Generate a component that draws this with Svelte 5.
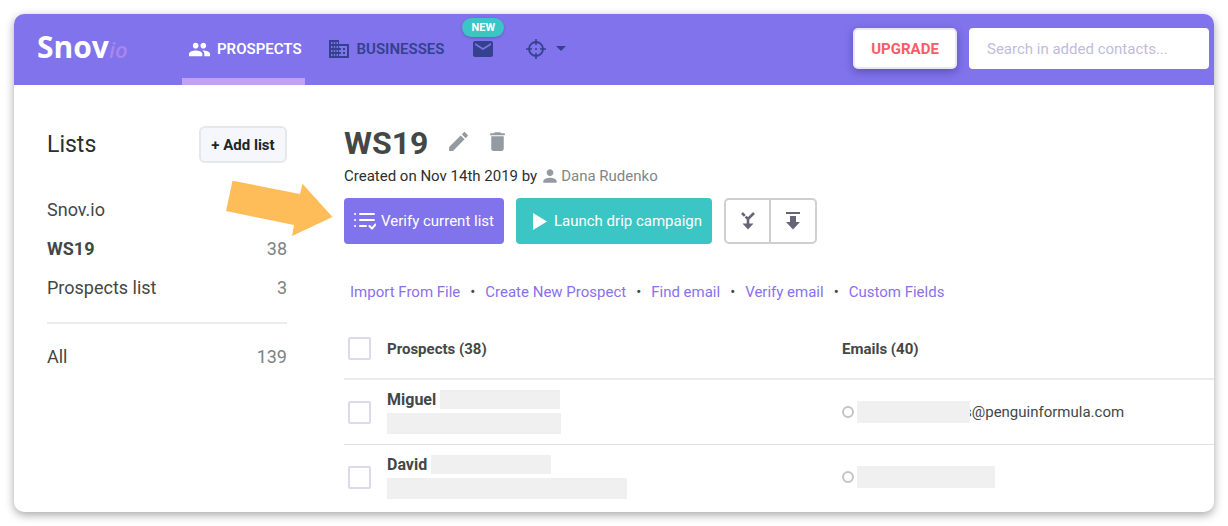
<script>
  let search = $state('');
  let activeList = $state('WS19');

  const lists = [
    { name: 'Snov.io', count: '' },
    { name: 'WS19', count: 38 },
    { name: 'Prospects list', count: 3 }
  ];

  const actions = ['Import From File', 'Create New Prospect', 'Find email', 'Verify email', 'Custom Fields'];

  // widths of the hidden values, in px
  let prospects = $state([
    { name: 'Miguel', surname: 120, company: 174, email: 113, domain: 's@penguinformula.com', checked: false },
    { name: 'David', surname: 120, company: 240, email: 138, domain: '', checked: false }
  ]);

  let allChecked = $derived(prospects.every((p) => p.checked));

  function toggleAll(e) {
    const value = e.currentTarget.checked;
    prospects.forEach((p) => (p.checked = value));
  }

  const icons = {
    people: 'M16 11c1.66 0 2.99-1.34 2.99-3S17.66 5 16 5c-1.66 0-3 1.34-3 3s1.34 3 3 3zm-8 0c1.66 0 2.99-1.34 2.99-3S9.66 5 8 5C6.34 5 5 6.34 5 8s1.34 3 3 3zm0 2c-2.33 0-7 1.17-7 3.5V19h14v-2.5c0-2.33-4.67-3.5-7-3.5zm8 0c-.29 0-.62.02-.97.05 1.16.84 1.97 1.97 1.97 3.45V19h6v-2.5c0-2.33-4.67-3.5-7-3.5z',
    business: 'M12 7V3H2v18h20V7H12zM5.5 19H4v-2h1.5v2zm0-4H4v-2h1.5v2zm0-4H4V9h1.5v2zm0-4H4V5h1.5v2zm2.7 12H6.8v-2h1.4v2zm0-4H6.8v-2h1.4v2zm0-4H6.8V9h1.4v2zm0-4H6.8V5h1.4v2zM11 19H9.5v-2H11v2zm0-4H9.5v-2H11v2zm0-4H9.5V9H11v2zm0-4H9.5V5H11v2zm9 12h-8v-2h2v-2h-2v-2h2v-2h-2V9h8v10zm-2-8h-2v2h2v-2zm0 4h-2v2h2v-2z',
    mail: 'M20 4H4c-1.1 0-1.99.9-1.99 2L2 18c0 1.1.9 2 2 2h16c1.1 0 2-.9 2-2V6c0-1.1-.9-2-2-2zm0 4l-8 5-8-5V6l8 5 8-5v2z',
    edit: 'M3 17.25V21h3.75L17.81 9.94l-3.75-3.75L3 17.25zM20.71 7.04c.39-.39.39-1.02 0-1.41l-2.34-2.34c-.39-.39-1.02-.39-1.41 0l-1.83 1.83 3.75 3.75 1.83-1.83z',
    trash: 'M6 19c0 1.1.9 2 2 2h8c1.1 0 2-.9 2-2V7H6v12zM19 4h-3.5l-1-1h-5l-1 1H5v2h14V4z',
    person: 'M12 12c2.21 0 4-1.79 4-4s-1.79-4-4-4-4 1.79-4 4 1.79 4 4 4zm0 2c-2.67 0-8 1.34-8 4v2h16v-2c0-2.66-5.33-4-8-4z'
  };
</script>

{#snippet icon(name, size)}
  <svg width={size} height={size} viewBox="0 0 24 24" fill="currentColor" aria-hidden="true">
    <path d={icons[name]} />
  </svg>
{/snippet}

<div class="app">
  <header>
    <a class="logo" href="#home">Snov<i>io</i></a>

    <nav>
      <a class="nav-item active" href="#prospects">{@render icon('people', 23)}PROSPECTS</a>
      <a class="nav-item" href="#businesses">{@render icon('business', 24)}BUSINESSES</a>
      <a class="nav-item mail" href="#campaigns" aria-label="Campaigns">
        {@render icon('mail', 24)}
        <span class="badge">NEW</span>
      </a>
      <button class="nav-item tools" aria-label="Tools">
        <svg width="20" height="20" viewBox="0 0 20 20" fill="none" stroke="currentColor" stroke-width="1.8" aria-hidden="true">
          <circle cx="10" cy="10" r="7" />
          <path d="M10 0v6M10 14v6M0 10h6M14 10h6" stroke-width="1.6" />
          <circle cx="10" cy="10" r="1" fill="currentColor" stroke="none" />
        </svg>
        <svg width="10" height="5" viewBox="0 0 10 5" fill="currentColor" aria-hidden="true">
          <path d="M0 0h10L5 5z" />
        </svg>
      </button>
    </nav>

    <button class="upgrade">UPGRADE</button>
    <input class="search" type="text" aria-label="Search" placeholder="Search in added contacts..." bind:value={search} />
  </header>

  <div class="body">
    <aside>
      <div class="lists-head">
        <h2>Lists</h2>
        <button class="add-list">+ Add list</button>
      </div>
      <ul>
        {#each lists as list}
          <li>
            <button class="list" class:selected={list.name === activeList} onclick={() => (activeList = list.name)}>
              <span>{list.name}</span>
              <span class="count">{list.count}</span>
            </button>
          </li>
        {/each}
      </ul>
      <button class="list all">
        <span>All</span>
        <span class="count">139</span>
      </button>
    </aside>

    <main>
      <div class="title">
        <h1>WS19</h1>
        <button class="icon-btn" aria-label="Rename list">{@render icon('edit', 25)}</button>
        <button class="icon-btn" aria-label="Delete list">{@render icon('trash', 25)}</button>
      </div>
      <p class="created">
        Created on Nov 14th 2019 by
        <span class="author">{@render icon('person', 20)}Dana Rudenko</span>
      </p>

      <div class="buttons">
        <svg class="pointer" width="108" height="57" viewBox="0 0 108 57" aria-hidden="true">
          <path fill="#ffbd59" d="M6.5 .7L74 14l2.5-10.3L106.5 37 66 56l2-11L0 31z" />
        </svg>
        <button class="btn verify">
          <svg width="22" height="18" viewBox="0 0 22 18" fill="none" stroke="currentColor" stroke-width="2" stroke-linecap="round" aria-hidden="true">
            <path d="M6 2h14M6 8h14M6 14h6" />
            <path d="M1 2h.1M1 8h.1M1 14h.1" />
            <path d="M15.5 14l2.5 2.5 3.5-4" stroke-linejoin="round" />
          </svg>
          Verify current list
        </button>
        <button class="btn launch">
          <svg width="14" height="17" viewBox="0 0 14 17" fill="currentColor" aria-hidden="true">
            <path d="M0 0l14 8.5L0 17z" />
          </svg>
          Launch drip campaign
        </button>
        <div class="group">
          <button aria-label="Merge lists">
            <svg width="14" height="18" viewBox="0 0 14 18" fill="none" stroke="currentColor" stroke-width="2.6" aria-hidden="true">
              <path d="M1 1l2.8 2.8M4.6 4.6L7 7l6-6M7 6v7" />
              <path d="M1.500 11.500h11L7 17.500z" fill="currentColor" stroke="none" />
            </svg>
          </button>
          <button aria-label="Export list">
            <svg width="14" height="18" viewBox="0 0 14 18" fill="currentColor" aria-hidden="true">
              <path d="M0 0h14v2H0zM4 4h6v6h4l-7 7.5L0 10h4z" />
            </svg>
          </button>
        </div>
      </div>

      <div class="actions">
        {#each actions as action, i}
          {#if i > 0}<span class="dot">•</span>{/if}
          <a href="#action">{action}</a>
        {/each}
      </div>

      <table>
        <thead>
          <tr>
            <th class="check"><input type="checkbox" aria-label="Select all" checked={allChecked} onchange={toggleAll} /></th>
            <th>Prospects (38)</th>
            <th class="email-col">Emails (40)</th>
          </tr>
        </thead>
        <tbody>
          {#each prospects as p}
            <tr>
              <td class="check"><input type="checkbox" aria-label="Select {p.name}" bind:checked={p.checked} /></td>
              <td>
                <div class="name">{p.name}<span class="bar" style="width: {p.surname}px"></span></div>
                <div class="bar company" style="width: {p.company}px"></div>
              </td>
              <td>
                <div class="email">
                  <span class="status"></span>
                  <span class="bar" style="width: {p.email}px"></span>
                  <span class="domain">{p.domain}</span>
                </div>
              </td>
            </tr>
          {/each}
        </tbody>
      </table>
    </main>
  </div>
</div>

<style>
  :global(body) {
    background: #fff;
  }

  .app {
    margin: 14px;
    border-radius: 10px;
    overflow: hidden;
    background: #fff;
    box-shadow: 0 3px 10px rgba(0, 0, 0, 0.35);
    font-family: Roboto, sans-serif;
    font-size: 15px;
    color: #434746;
  }

  .app * {
    box-sizing: border-box;
  }

  button {
    font: inherit;
    color: inherit;
    border: 0;
    padding: 0;
    background: none;
    cursor: pointer;
  }

  a {
    text-decoration: none;
  }

  svg {
    flex: none;
    display: block;
  }

  header {
    display: flex;
    align-items: center;
    height: 71px;
    padding: 0 5px 2px 23px;
    background: #8073ec;
  }

  .logo {
    width: 145px;
    font-family: 'Open Sans', sans-serif;
    font-size: 30px;
    font-weight: 700;
    line-height: 40px;
    padding-bottom: 2px;
    color: #fff;
  }

  .logo i {
    font-size: 22px;
    font-weight: 600;
    color: #a886ee;
  }

  nav {
    display: flex;
    align-self: stretch;
    flex: 1;
  }

  .nav-item {
    position: relative;
    display: flex;
    align-items: center;
    gap: 6px;
    padding: 0 3px 0 6px;
    font-size: 15px;
    font-weight: 600;
    color: #33418f;
  }

  .nav-item + .nav-item {
    margin-left: 16px;
  }

  .nav-item.active {
    height: 71px;
    border-bottom: 7px solid #c0a1f2;
    padding-top: 6px;
    color: #fff;
  }

  .nav-item.mail {
    margin-left: 18px;
  }

  .badge {
    position: absolute;
    top: 4px;
    left: -3px;
    padding: 0 9px;
    border-radius: 10px;
    background: #3bc5c4;
    box-shadow: 0 1px 3px rgba(0, 0, 0, 0.2);
    color: #fff;
    font-size: 11px;
    font-weight: 700;
    line-height: 19px;
  }

  .nav-item.tools {
    gap: 10px;
    margin-left: 22px;
  }

  .upgrade {
    width: 104px;
    height: 41px;
    margin-right: 12px;
    border: 2px solid #e9e7f7;
    border-radius: 5px;
    background: #fff;
    box-shadow: 0 3px 8px rgba(40, 30, 110, 0.4);
    color: #fc5a68;
    font-weight: 700;
  }

  .search {
    width: 240px;
    height: 41px;
    padding: 0 18px;
    border: 0;
    border-radius: 4px;
    background: #fff;
    font: inherit;
  }

  .search::placeholder {
    color: #bfbcdc;
  }

  .body {
    display: flex;
    gap: 57px;
    padding-left: 33px;
  }

  aside {
    width: 240px;
    flex: none;
    padding-top: 41px;
    font-size: 18px;
  }

  .lists-head {
    display: flex;
    align-items: center;
    justify-content: space-between;
    margin-bottom: 27px;
  }

  h2 {
    margin: 0;
    font-size: 23px;
    font-weight: 400;
    color: #2b2f2f;
  }

  .add-list {
    width: 88px;
    height: 37px;
    border: 2px solid #e6e7eb;
    border-radius: 6px;
    background: #f6f7fd;
    color: #202526;
    font-size: 15px;
    font-weight: 700;
  }

  ul {
    list-style: none;
    margin: 0 0 15px;
    padding: 0;
  }

  .list {
    display: flex;
    align-items: center;
    justify-content: space-between;
    width: 100%;
    height: 39px;
  }

  .selected {
    font-weight: 700;
  }

  .count {
    font-weight: 400;
    color: #7e8282;
  }

  .all {
    height: 66px;
    border-top: 2px solid #ededed;
  }

  main {
    flex: 1;
    min-width: 0;
    padding: 40px 0 2px;
  }

  .title {
    display: flex;
    align-items: center;
    height: 36px;
  }

  h1 {
    margin: 0 18px 0 0;
    font-size: 32px;
    font-weight: 700;
  }

  .icon-btn {
    margin-right: 14px;
    padding-bottom: 3px;
    color: #949aa1;
  }

  .created {
    display: flex;
    align-items: center;
    gap: 3px;
    height: 24px;
    margin: 3px 0 10px;
    color: #2b2f2f;
  }

  .author {
    display: flex;
    align-items: center;
    gap: 1px;
    color: #828686;
  }

  .author svg {
    color: #949aa1;
  }

  .buttons {
    position: relative;
    display: flex;
    gap: 12px;
  }

  .pointer {
    position: absolute;
    top: -18px;
    left: -118px;
  }

  .btn {
    display: flex;
    align-items: center;
    justify-content: center;
    height: 46px;
    border-radius: 4px;
    color: #fff;
  }

  .verify {
    width: 160px;
    gap: 5px;
    background: #8073ec;
  }

  .launch {
    width: 196px;
    gap: 7px;
    padding-left: 7px;
    background: #3bc5c4;
  }

  .group {
    display: flex;
    border: 2px solid #cfcfcf;
    border-radius: 5px;
    color: #656577;
  }

  .group button {
    display: flex;
    align-items: center;
    justify-content: center;
    width: 43px;
  }

  .group button + button {
    width: 46px;
    border-left: 2px solid #cfcfcf;
  }

  .actions {
    display: flex;
    align-items: center;
    height: 24px;
    margin: 36px 0 14px;
    padding-left: 6px;
  }

  .actions a {
    color: #8a70ee;
  }

  .dot {
    width: 25px;
    text-align: center;
    font-size: 15px;
  }

  table {
    width: 100%;
    border-collapse: separate;
    border-spacing: 0;
    table-layout: fixed;
  }

  th {
    height: 62px;
    padding: 1px 0 0;
    border-bottom: 2px solid #ebebeb;
    text-align: left;
    font-weight: 700;
  }

  td {
    height: 65px;
    padding: 0;
    border-bottom: 1px solid #e2e2e2;
  }

  tr:last-child td {
    border-bottom-color: transparent;
  }

  .check {
    width: 43px;
    padding: 0 0 0 4px;
  }

  .email-col {
    width: 372px;
  }

  input[type='checkbox'] {
    appearance: none;
    display: block;
    width: 23px;
    height: 23px;
    margin: 0;
    border: 2px solid #dbd9ea;
    border-radius: 2px;
    background: #fff;
  }

  input[type='checkbox']:checked {
    background: #8073ec;
  }

  .name {
    display: flex;
    gap: 4px;
    line-height: 19px;
    margin-bottom: 4px;
    font-size: 16px;
    font-weight: 700;
  }

  .bar {
    height: 19px;
    background: #f0f0f0;
  }

  .company {
    height: 21px;
  }

  .email {
    display: flex;
    align-items: center;
  }

  .email .bar {
    position: relative;
    height: 22px;
    margin-right: -6px;
  }

  .status {
    width: 12px;
    height: 12px;
    margin-right: 3px;
    border: 2px solid #c4c4c4;
    border-radius: 50%;
  }
</style>
